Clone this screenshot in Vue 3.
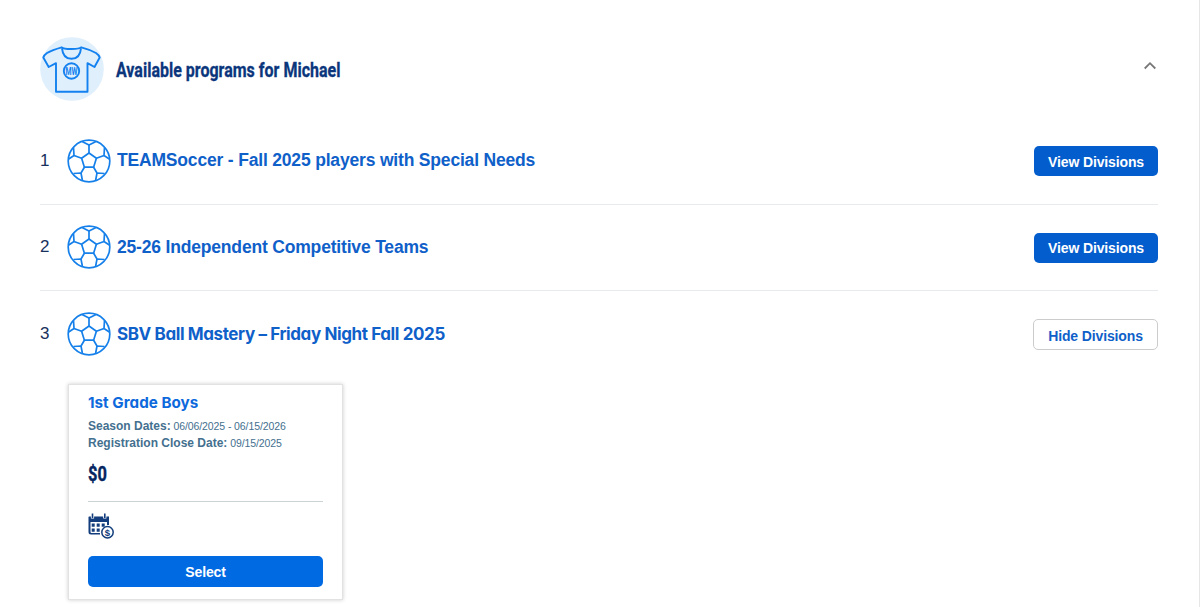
<script setup>
import { ref } from "vue";

// variables
const expanded = ref(true);
const programs = ref([
  { id: 1, name: "TEAMSoccer - Fall 2025 players with Special Needs", font: "wide", open: false },
  { id: 2, name: "25-26 Independent Competitive Teams", font: "wide", open: false },
  { id: 3, name: "SBV Ball Mastery – Friday Night Fall 2025", font: "round", open: true },
]);
const division = {
  name: "1st Grade Boys",
  season: "06/06/2025 - 06/15/2026",
  closeDate: "09/15/2025",
  price: "$0",
};

// functions
function toggle(program) {
  program.open = !program.open;
}
</script>

<template>
  <div class="panel">
    <div class="header">
      <svg class="avatar" viewBox="0 0 64 64">
        <circle cx="32" cy="32" r="31.800" fill="#e0effc" />
        <g fill="none" stroke="#1381ef" stroke-width="1.900" stroke-linejoin="round">
          <path
            d="M21.700 10.300 Q12 13 7 16 Q4 18 3.300 20.500 L8.700 30 L16 26.200 V54.700 H47.500 V26.200 L54.500 30 L59.700 20.500 Q59 18 56 16 Q50 12.500 41.200 10.300 Q40 12 31.500 12 Q23 12 21.700 10.300 Z"
          />
          <path d="M22 11.300 Q23 21.800 31.500 21.800 Q40 21.800 41 11.300" />
          <circle cx="31.500" cy="34" r="7.700" />
        </g>
        <text x="31.500" y="37.500" text-anchor="middle" textLength="12" lengthAdjust="spacingAndGlyphs">MW</text>
      </svg>
      <h2 class="title">Available programs for Michael</h2>
      <svg class="chevron" viewBox="0 0 14 10" @click="expanded = !expanded">
        <path d="M1.700 7.500 L7 2.200 L12.300 7.500" fill="none" stroke="#777" stroke-width="1.800" />
      </svg>
    </div>

    <div v-if="expanded">
      <div v-for="program in programs" :key="program.id" class="program">
        <span class="number">{{ program.id }}</span>
        <svg class="ball" viewBox="0 0 44 44">
          <g fill="none" stroke="#1680ea" stroke-width="1.700" stroke-linejoin="round">
            <circle cx="22" cy="22" r="20.800" />
            <path d="M22 14 L29.400 19.300 L26.600 28.200 H17.400 L14.600 19.300 Z" />
            <path d="M22 14 V6 M29.400 19.300 L37 16.500 M26.600 28.200 L30 34 M17.400 28.200 L14 34 M14.600 19.300 L7 16.500" />
            <path d="M15 2.500 L22 6 L29 2.500 M37.500 8.500 L37 16.500 L42.300 20 M37.500 34.500 L30 34 L28.500 42 M6.500 34.500 L14 34 L15.500 42 M6.500 8.500 L7 16.500 L1.700 20" />
          </g>
        </svg>
        <span class="name" :class="program.font">{{ program.name }}</span>
        <button class="btn" :class="{ outline: program.open }" @click="toggle(program)">
          {{ program.open ? "Hide Divisions" : "View Divisions" }}
        </button>
      </div>

      <div v-if="programs[2].open" class="card">
        <h3>{{ division.name }}</h3>
        <p><b>Season Dates:</b> {{ division.season }}</p>
        <p><b>Registration Close Date:</b> {{ division.closeDate }}</p>
        <div class="price">{{ division.price }}</div>
        <hr />
        <svg class="calendar" viewBox="0 0 27 27">
          <path d="M1 3.500 H21 V12 H19 V9 H2.500 V19 Q2.500 20 3.500 20 H12 V21.500 H3 Q0.500 21.500 0.500 19 V4 Z" fill="#133d7c" />
          <path d="M4.500 1.500 V5.500 M16.800 1.500 V5.500" stroke="#fff" stroke-width="3.200" />
          <path d="M4.500 0.500 V5 M16.800 0.500 V5" stroke="#133d7c" stroke-width="1.600" />
          <path d="M3.700 10.500 h3 v3.200 h-3 z M8.700 10.500 h3 v3.200 h-3 z M13.700 10.500 h3 v3.200 h-3 z M3.700 15.500 h3 v3.200 h-3 z M8.700 15.500 h3 v3.200 h-3 z" fill="#133d7c" />
          <circle cx="19.500" cy="19.300" r="5.700" fill="#fff" stroke="#133d7c" stroke-width="1.500" />
          <text x="19.500" y="22.900" text-anchor="middle">$</text>
        </svg>
        <button class="btn select">Select</button>
      </div>
    </div>
  </div>
</template>

<style>
body {
  margin: 0;
  background: #fff;
}
</style>

<style scoped>
.panel {
  box-sizing: border-box;
  height: 607px;
  overflow: hidden;
  padding: 37px 41px 0 40px;
  border-right: 1px solid #e6e6e6;
  font-family: "Liberation Sans", Arial, sans-serif;
}
.header {
  display: flex;
  align-items: center;
  height: 64px;
  margin-bottom: 17px;
}
.avatar {
  width: 64px;
  height: 64px;
  flex: none;
}
.avatar text {
  font: bold 10px Roboto, sans-serif;
  fill: #1381ef;
}
.title {
  margin: 1px 0 0 12px;
  font: bold 20px/24px Roboto, sans-serif;
  color: #0b367c;
  -webkit-text-stroke: 0.3px #0b367c;
  white-space: nowrap;
  transform: scaleX(0.8);
  transform-origin: left;
}
.chevron {
  width: 14px;
  height: 10px;
  margin: 0 1px 7px auto;
  cursor: pointer;
}
.program {
  box-sizing: border-box;
  display: flex;
  align-items: center;
  height: 86.5px;
  border-bottom: 1px solid #e7ebee;
}
.program:nth-child(3) {
  border-bottom-color: transparent;
}
.number {
  width: 27px;
  font-size: 17px;
  color: #17305c;
}
.ball {
  width: 44px;
  height: 44px;
  margin-right: 6px;
}
.name {
  font-size: 17.5px;
  font-weight: bold;
  letter-spacing: -0.18px;
  color: #0f60c9;
  white-space: nowrap;
}
.name.round {
  font-family: Inter, sans-serif;
  font-feature-settings: "cv11";
  font-weight: 700;
  font-size: 17px;
  letter-spacing: -0.39px;
}
.btn {
  box-sizing: border-box;
  width: 124px;
  height: 30px;
  margin: 1px 0 0 auto;
  padding: 1px 0 0;
  border: 0;
  border-radius: 5px;
  background: #035dcd;
  color: #fff;
  font: bold 14px "Liberation Sans", Arial, sans-serif;
  letter-spacing: -0.13px;
  white-space: nowrap;
  cursor: pointer;
}
.btn.outline {
  width: 125px;
  height: 31px;
  padding-top: 3px;
  border: 1px solid #ccc;
  background: #fff;
  color: #0f60c9;
}
.card {
  box-sizing: border-box;
  width: 275px;
  height: 216px;
  margin: 6.5px 0 0 28px;
  padding: 9px 19px 0;
  background: #fff;
  border: 1px solid #e2e2e2;
  box-shadow: 0 0 4px rgba(0, 0, 0, 0.2);
}
.card h3 {
  margin: 0 0 7px;
  font: 700 15.2px/17px Inter, sans-serif;
  font-feature-settings: "cv11";
  letter-spacing: 0.02px;
  color: #0d69dc;
}
.card p {
  margin: 0;
  font-size: 10.5px;
  line-height: 17px;
  letter-spacing: -0.1px;
  color: #44708f;
  white-space: nowrap;
}
.card p b {
  font-size: 12px;
  letter-spacing: 0;
}
.price {
  margin-top: 10px;
  font: bold 21px/24px Roboto, sans-serif;
  color: #052660;
  -webkit-text-stroke: 0.4px #052660;
  transform: scaleX(0.78);
  transform-origin: left;
}
hr {
  height: 1px;
  margin: 15px 0 11px;
  border: 0;
  background: #ccd3d7;
}
.calendar {
  display: block;
  width: 27px;
  height: 27px;
}
.calendar text {
  font: bold 9.5px "Liberation Sans", sans-serif;
  fill: #133d7c;
}
.btn.select {
  display: block;
  width: 235px;
  height: 31px;
  margin: 16px 0 0;
  background: #006ae3;
}
</style>
